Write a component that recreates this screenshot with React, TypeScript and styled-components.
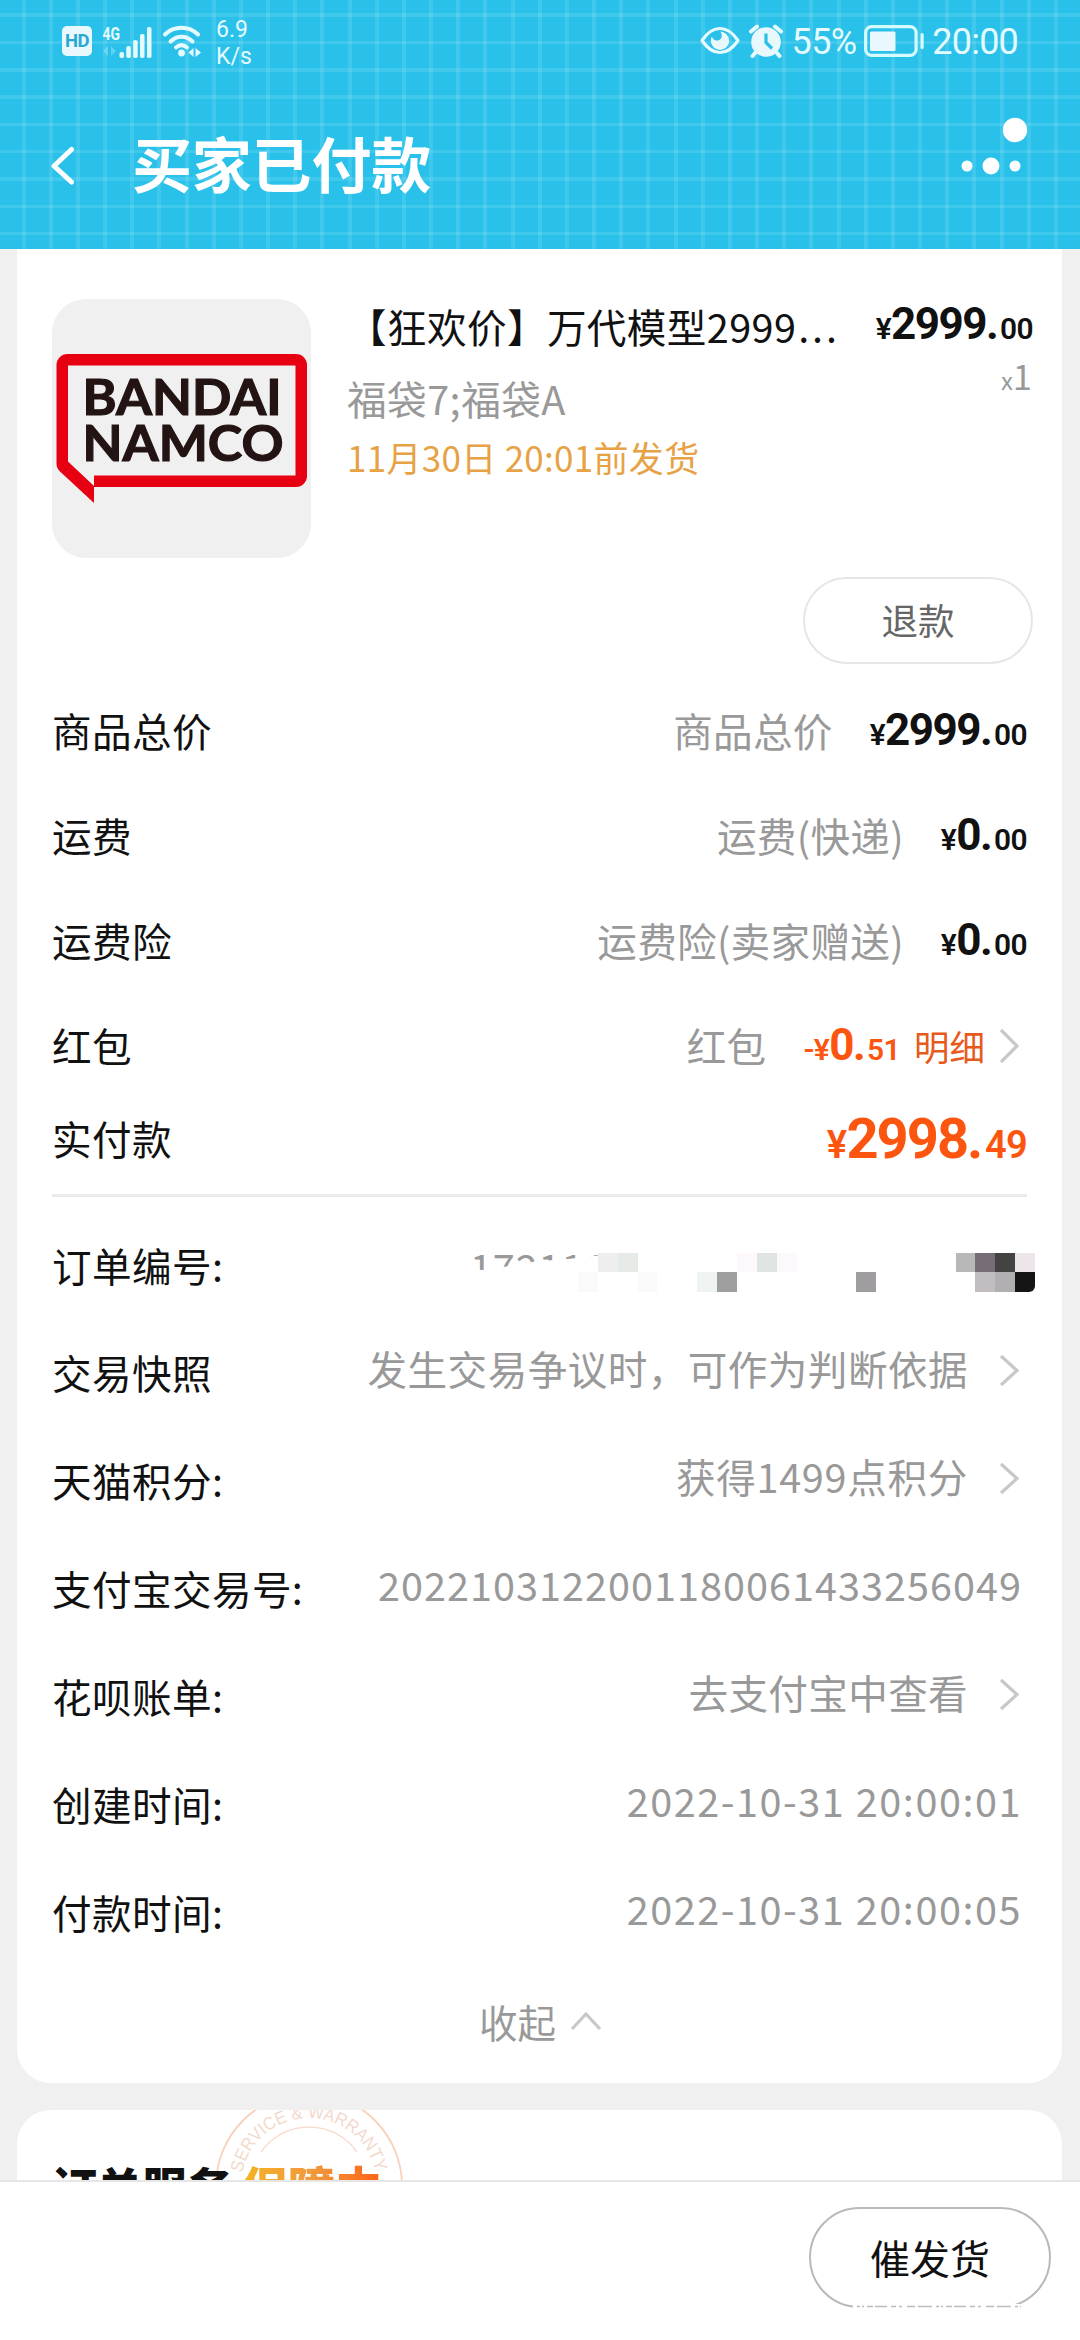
import React from "react";
import styled, { createGlobalStyle } from "styled-components";

const CJK = '"Noto Sans CJK SC", "Noto Sans", sans-serif';
const NUM = 'Roboto, "Noto Sans CJK SC", sans-serif';

const Global = createGlobalStyle`
  * { box-sizing: border-box; }
  body { margin: 0; background: #f0f0f0; font-family: ${CJK}; color: #111; }
  svg { display: block; flex: none; }
`;

const Screen = styled.div`
  width: 1080px;
  height: 2340px;
  display: flex;
  flex-direction: column;
  overflow: hidden;
  background: #f0f0f0;
`;

/* ---------- header ---------- */

const Header = styled.header`
  flex: none;
  height: 249px;
  display: flex;
  flex-direction: column;
  color: #fff;
  background-color: #29c1ea;
  background-image:
    repeating-linear-gradient(
      90deg,
      transparent 0 21.5px,
      rgba(255, 255, 255, 0.11) 21.5px 25.5px,
      transparent 25.5px 27.17px
    ),
    repeating-linear-gradient(
      180deg,
      transparent 0 13.5px,
      rgba(255, 255, 255, 0.11) 13.5px 17px,
      transparent 17px 27.3px
    );
`;

const StatusBar = styled.div`
  height: 82px;
  padding: 0 62px 0 62px;
  display: flex;
  align-items: center;
  justify-content: space-between;
  color: #e4faff;
  font-family: ${NUM};
`;

const StatusGroup = styled.div<{ $gap: number }>`
  display: flex;
  align-items: center;
  gap: ${(p) => p.$gap}px;
`;

const HdBadge = styled.span`
  width: 30px;
  height: 30px;
  border-radius: 5px;
  background: #e8f8fd;
  color: #29a9d2;
  font-size: 18.5px;
  font-weight: 700;
  line-height: 31px;
  text-align: center;
  letter-spacing: -0.5px;
`;

const NetSpeed = styled.span`
  margin-left: 5px;
  padding-top: 3px;
  font-size: 23px;
  line-height: 27px;
  white-space: pre-line;
`;

const StatusText = styled.span<{ $spacing: number }>`
  padding-top: 2px;
  font-size: 36px;
  line-height: 40px;
  letter-spacing: ${(p) => p.$spacing}px;
`;

const TitleBar = styled.div`
  height: 167px;
  padding: 0 51px;
  display: flex;
  align-items: flex-start;
`;

const BackIcon = styled.svg`
  margin-top: 63px;
`;

const PageTitle = styled.h1`
  margin: 37px auto 0 57px;
  font-size: 60px;
  line-height: 86px;
  font-weight: 700;
  letter-spacing: -0.2px;
`;

const MoreIcon = styled.svg`
  margin-top: 34px;
`;

/* ---------- cards ---------- */

const Body = styled.main`
  flex: 1;
  min-height: 0;
  overflow: hidden;
  padding: 0 18px 0 17px;
  display: flex;
  flex-direction: column;
  gap: 27px;
`;

const OrderCard = styled.section`
  flex: none;
  height: 1834px;
  padding: 50px 35px 0;
  background: #fff;
  border-radius: 0 0 34px 34px;
`;

const Product = styled.div`
  display: flex;
  height: 259px;
  margin-right: -6px;
`;

const Thumb = styled.div`
  flex: none;
  width: 259px;
  height: 259px;
  border-radius: 34px;
  background: #f0f0f0;
  overflow: hidden;
`;

const ProductInfo = styled.div`
  margin: -2px 0 0 36px;
  width: 494px;
  display: flex;
  flex-direction: column;
  white-space: nowrap;
`;

const ProductTitle = styled.div`
  font-size: 39.6px;
  line-height: 58px;
  letter-spacing: 0.4px;
`;

const Dots = styled.span`
  letter-spacing: 2.8px;
  margin-left: 2px;
`;

const Sku = styled.div`
  margin-top: 14px;
  font-size: 39.6px;
  line-height: 58px;
  letter-spacing: 0.5px;
  color: #999;
`;

const ShipBy = styled.div`
  margin-top: 4px;
  font-size: 35px;
  line-height: 52px;
  letter-spacing: 0.3px;
  color: #e6a245;
`;

const PriceColumn = styled.div`
  margin-left: auto;
  display: flex;
  flex-direction: column;
  align-items: flex-end;
`;

const Quantity = styled.div`
  margin: 0 1px 0 0;
  font-size: 34.5px;
  line-height: 48px;
  color: #999;
  small { font-size: 24px; }
`;

const Money = styled.span<{ $size?: number; $color?: string }>`
  display: inline-flex;
  align-items: baseline;
  font-family: ${NUM};
  font-weight: 700;
  font-size: ${(p) => p.$size ?? 44}px;
  line-height: 1.18;
  letter-spacing: -0.035em;
  color: ${(p) => p.$color ?? "#111"};
`;

const Point = styled.span`
  letter-spacing: 0.03em;
`;

const Minor = styled.span`
  font-size: 0.68em;
  font-weight: 600;
  letter-spacing: -0.02em;
`;

const Actions = styled.div`
  margin: 19px -6px 17px 0;
  display: flex;
  justify-content: flex-end;
`;

const RefundButton = styled.button`
  width: 230px;
  height: 87px;
  padding: 0 0 2px;
  border: 2px solid #e6e6e6;
  border-radius: 44px;
  background: #fff;
  color: #666;
  font: 400 36.5px/50px ${CJK};
`;

const Row = styled.div<{ $h: number; $lift?: number }>`
  height: ${(p) => p.$h}px;
  display: flex;
  align-items: center;
  justify-content: space-between;
  font-size: 39.6px;
  line-height: 58px;
  white-space: nowrap;
  & > :last-child { margin-bottom: ${(p) => p.$lift ?? 0}px; }
`;

const Label = styled.span`
  margin-bottom: 7px;
  letter-spacing: 0.4px;
`;

const Value = styled.span<{ $right?: number }>`
  display: flex;
  align-items: center;
  margin-right: ${(p) => p.$right ?? 0}px;
  color: #999;
`;

const Note = styled.span<{ $gap?: number; $spacing?: number; $rise?: number }>`
  margin: 0 ${(p) => p.$gap ?? 0}px ${(p) => p.$rise ?? 2}px 0;
  letter-spacing: ${(p) => p.$spacing ?? 0.3}px;
`;

const Detail = styled.span`
  margin: 0 14px 0 14px;
  font-size: 35.5px;
  color: #e85a1c;
`;

const Divider = styled.hr`
  height: 3px;
  margin: 12px 0 19px;
  border: 0;
  background: #ebebeb;
`;

const MaskedNumber = styled.span`
  position: relative;
  margin-right: -8px;
  width: 562px;
  height: 39px;
  display: flex;
  justify-content: flex-end;
  align-items: flex-start;
  color: #999;
`;

const NumberHead = styled.span`
  position: absolute;
  left: -3px;
  top: -16px;
  letter-spacing: 0.9px;
  clip-path: polygon(0 0, 142px 0, 142px 18px, 118px 20px, 94px 23px, 68px 24.5px, 46px 28px, 22px 33px, 0 34px);
`;

const Mosaic = styled.span`
  display: grid;
  grid-template-columns: repeat(23, 19.88px);
  grid-template-rows: repeat(2, 19.5px);
  border-bottom-right-radius: 6px;
  overflow: hidden;
`;

const Tile = styled.i<{ $col: number; $row: number; $fill: string }>`
  grid-column: ${(p) => p.$col};
  grid-row: ${(p) => p.$row};
  background: ${(p) => p.$fill};
`;

const Collapse = styled.div`
  height: 104px;
  padding-left: 2px;
  display: flex;
  align-items: center;
  justify-content: center;
  gap: 14px;
  color: #999;
  font-size: 38.5px;
  line-height: 58px;
`;

const ServiceCard = styled.section`
  flex: none;
  position: relative;
  height: 160px;
  padding: 43px 35px 0;
  background: #fff;
  border-radius: 34px 34px 0 0;
  overflow: hidden;
`;

const Stamp = styled.svg`
  position: absolute;
  left: 192px;
  top: 0;
`;

const ServiceTitle = styled.h2`
  position: relative;
  margin: 0;
  display: flex;
  align-items: baseline;
  font-size: 45px;
  line-height: 66px;
  font-weight: 900;
  color: #111;
`;

const Guarded = styled.span`
  margin-left: 9px;
  font-size: 47px;
  color: transparent;
  background: linear-gradient(90deg, #f6b323, #ef9a3d 50%, #ff6417);
  background-clip: text;
  -webkit-background-clip: text;
`;

/* ---------- footer ---------- */

const Footer = styled.footer`
  flex: none;
  height: 160px;
  padding: 25px 29px 0;
  display: flex;
  justify-content: flex-end;
  align-items: flex-start;
  background: #fff;
  border-top: 2px solid #e6e6e6;
`;

const UrgeButton = styled.button`
  position: relative;
  width: 242px;
  height: 101px;
  padding: 0 0 2px;
  border: 2px solid #b9b9b9;
  border-radius: 51px;
  background: #fff;
  color: #111;
  font: 400 40px/58px ${CJK};
`;

const WornEdge = styled.svg`
  position: absolute;
  left: 42px;
  bottom: -3px;
`;

const rowChevron = (h: number) => (
  <svg width="21" height={h + 4} viewBox={`0 0 21 ${h + 4}`} fill="none" stroke="#c8c8c8" strokeWidth="3.2">
    <path d={`M2 2 L18 ${(h + 4) / 2} L2 ${h + 2}`} />
  </svg>
);

const Price = ({ int, dec, size, color, minus }: { int: string; dec: string; size?: number; color?: string; minus?: boolean }) => (
  <Money $size={size} $color={color}>
    <Minor>{minus ? "-¥" : "¥"}</Minor>
    {int}<Point>.</Point><Minor>{dec}</Minor>
  </Money>
);

const tiles: [number, number, string][] = [
  [2, 1, "#eeeeee"], [3, 1, "#e6ebe8"], [9, 1, "#fcf8fc"], [10, 1, "#dfe5e2"], [11, 1, "#fcf9fc"],
  [20, 1, "#b8b8b8"], [21, 1, "#776d77"], [22, 1, "#434343"], [23, 1, "#ece5e9"],
  [1, 2, "#fafafa"], [4, 2, "#fafafa"], [7, 2, "#eff3f1"], [8, 2, "#9f9f9f"], [15, 2, "#9f9d9f"],
  [21, 2, "#c1bdc1"], [22, 2, "#b1afb1"], [23, 2, "#151515"],
];

const details: { label: string; value: string; link?: boolean; spacing?: number }[] = [
  { label: "交易快照", value: "发生交易争议时，可作为判断依据", link: true, spacing: 0.45 },
  { label: "天猫积分:", value: "获得1499点积分", link: true, spacing: 0.7 },
  { label: "支付宝交易号:", value: "2022103122001180061433256049", spacing: 1.03 },
  { label: "花呗账单:", value: "去支付宝中查看", link: true, spacing: 0.35 },
  { label: "创建时间:", value: "2022-10-31 20:00:01", spacing: 1.55 },
  { label: "付款时间:", value: "2022-10-31 20:00:05", spacing: 1.55 },
];

export default function App() {
  return (
    <Screen>
      <Global />
      <Header>
        <StatusBar>
          <StatusGroup $gap={10}>
            <HdBadge>HD</HdBadge>
            <svg width="51" height="34" viewBox="0 0 51 34" fill="#e4faff">
              <text x="0.5" y="16" fontFamily="Roboto" fontWeight="700" fontSize="18" textLength="17.5" lengthAdjust="spacingAndGlyphs">4G</text>
              <path d="M6 22v10l-5-5zM9 22v10l5-5z" opacity="0.3" />
              <rect x="17.5" y="28" width="4.5" height="6" rx="1.8" />
              <rect x="24.3" y="22" width="4.5" height="12" rx="1.8" />
              <rect x="31.2" y="16" width="4.5" height="18" rx="1.8" />
              <rect x="38" y="10" width="4.5" height="24" rx="1.8" />
              <rect x="45" y="3" width="4.5" height="31" rx="1.8" />
            </svg>
            <svg width="38" height="32" viewBox="0 0 38 32" fill="none" stroke="#e4faff" strokeWidth="4" strokeLinecap="round">
              <path d="M2 9.5C11 0.5 26 0.5 35 9.5" />
              <path d="M7.5 16.5C14 10 23 10 29.5 16.5" />
              <path d="M13 22.5C16.5 19.5 20.5 19.5 24 22.5" />
              <circle cx="18.5" cy="28" r="3.4" fill="#e4faff" stroke="none" />
              <path d="M30.5 23v9l-5-4.5zM32.5 23v9l5.5-4.5z" fill="#e4faff" stroke="none" />
            </svg>
            <NetSpeed>{"6.9\nK/s"}</NetSpeed>
          </StatusGroup>
          <StatusGroup $gap={8}>
            <svg width="40" height="32" viewBox="0 0 40 32" fill="none">
              <path d="M2 15.5C8 6.5 14 3.5 20 3.5S32 6.5 38 15.5C32 24.5 26 27.5 20 27.5S8 24.5 2 15.5z" stroke="#e4faff" strokeWidth="3.2" strokeLinejoin="round" />
              <path d="M20 6.5a9.2 9.2 0 1 1-9.2 9.2c0-1.5.3-2.9 1-4.2 1 2.5 3 4 5 4 3 0 5-2.2 5-4.8 0-1.7-.7-3.2-1.8-4.2z" fill="#e8f8fd" />
            </svg>
            <svg width="36" height="34" viewBox="0 0 36 34" fill="#e8f8fd">
              <circle cx="18" cy="18" r="14.8" />
              <path d="M3 7.5L9 2.5M33 7.5L27 2.5" stroke="#e4faff" strokeWidth="4" strokeLinecap="round" />
              <path d="M7.5 28.5L4.5 32M28.5 28.5L31.5 32" stroke="#e4faff" strokeWidth="4" strokeLinecap="round" />
              <path d="M18 9.5V18.5L24 24.5" stroke="#29c1ea" strokeWidth="3.2" fill="none" />
            </svg>
            <StatusText $spacing={-0.7}>55%</StatusText>
            <svg width="60" height="32" viewBox="0 0 60 32" fill="none">
              <rect x="1.6" y="1.6" width="50.5" height="28.8" rx="6" stroke="#d4fbff" strokeWidth="3.2" />
              <rect x="6" y="6.5" width="25.5" height="19.5" rx="1.5" fill="#e8f8fd" />
              <rect x="56.5" y="8" width="3.2" height="16" rx="1.5" fill="#d4fbff" />
            </svg>
            <StatusText $spacing={-0.8}>20:00</StatusText>
          </StatusGroup>
        </StatusBar>
        <TitleBar>
          <BackIcon width="24" height="42" viewBox="0 0 24 42" fill="none" stroke="#fff" strokeWidth="5" strokeLinecap="round" strokeLinejoin="round">
            <path d="M20.5 4.5L3 21L20.5 37" />
          </BackIcon>
          <PageTitle>买家已付款</PageTitle>
          <MoreIcon width="70" height="64" viewBox="0 0 70 64" fill="#fff">
            <circle cx="56" cy="14" r="12.2" />
            <circle cx="8" cy="50" r="5.5" />
            <circle cx="32" cy="50" r="8.5" />
            <circle cx="56" cy="50" r="5.5" />
          </MoreIcon>
        </TitleBar>
      </Header>

      <Body>
        <OrderCard>
          <Product>
            <Thumb>
              <svg width="259" height="259" viewBox="0 0 259 259">
                <path
                  fill="#e60012"
                  fillRule="evenodd"
                  d="M15 55H244a11 11 0 0 1 11 11V177a11 11 0 0 1-11 11H42V204L8 172.500q-3.500-3.500-3.500-8V66a11 11 0 0 1 11-11zM16 66.500V162.500L42 187V176.500H243.500V66.500z"
                />
                <g fill="#231413" stroke="#231413" strokeWidth="1.2" fontFamily="Lato" fontWeight="700" fontSize="49">
                  <text x="30.5" y="115.5" textLength="199" lengthAdjust="spacingAndGlyphs">BANDAI</text>
                  <text x="30.5" y="161.5" textLength="201" lengthAdjust="spacingAndGlyphs">NAMCO</text>
                </g>
              </svg>
            </Thumb>
            <ProductInfo>
              <ProductTitle>【狂欢价】万代模型2999<Dots>...</Dots></ProductTitle>
              <Sku>福袋7;福袋A</Sku>
              <ShipBy>11月30日 20:01前发货</ShipBy>
            </ProductInfo>
            <PriceColumn>
              <Price int="2999" dec="00" />
              <Quantity><small>x</small>1</Quantity>
            </PriceColumn>
          </Product>

          <Actions>
            <RefundButton>退款</RefundButton>
          </Actions>

          <Row $h={105} $lift={5}>
            <Label>商品总价</Label>
            <Value><Note $gap={37}>商品总价</Note><Price int="2999" dec="00" /></Value>
          </Row>
          <Row $h={105} $lift={5}>
            <Label>运费</Label>
            <Value><Note $gap={37}>运费(快递)</Note><Price int="0" dec="00" /></Value>
          </Row>
          <Row $h={105} $lift={5}>
            <Label>运费险</Label>
            <Value><Note $gap={37}>运费险(卖家赠送)</Note><Price int="0" dec="00" /></Value>
          </Row>
          <Row $h={105} $lift={5}>
            <Label>红包</Label>
            <Value $right={7}>
              <Note $gap={37}>红包</Note>
              <Price int="0" dec="51" color="#fb5510" minus />
              <Detail>明细</Detail>
              {rowChevron(32)}
            </Value>
          </Row>
          <Row $h={81} $lift={5}>
            <Label>实付款</Label>
            <Value><Price int="2998" dec="49" size={56} color="#fb5510" /></Value>
          </Row>

          <Divider />

          <Row $h={105} $lift={-7}>
            <Label>订单编号:</Label>
            <MaskedNumber>
              <NumberHead>172111</NumberHead>
              <Mosaic>
                {tiles.map(([col, row, fill]) => (
                  <Tile key={`${col}-${row}`} $col={col} $row={row} $fill={fill} />
                ))}
              </Mosaic>
            </MaskedNumber>
          </Row>
          {details.map((d) => (
            <Row key={d.label} $h={108} $lift={9}>
              <Label>{d.label}</Label>
              <Value $right={d.link ? 7 : 5}>
                <Note $gap={d.link ? 31 : 0} $spacing={d.spacing} $rise={6}>{d.value}</Note>
                {d.link && rowChevron(29)}
              </Value>
            </Row>
          ))}

          <Collapse>
            收起
            <svg width="32" height="20" viewBox="0 0 32 20" fill="none" stroke="#c8c8c8" strokeWidth="3.2">
              <path d="M2 18L16 3L30 18" />
            </svg>
          </Collapse>
        </OrderCard>

        <ServiceCard>
          <Stamp width="200" height="90" viewBox="0 0 200 90" fill="none">
            <circle cx="100" cy="76" r="93" stroke="#f8d0bb" strokeWidth="1.8" />
            <path d="M52 42A58.5 58.5 0 0 1 148 42" stroke="#f8ddd0" strokeWidth="1.5" />
            <path id="stamp-arc" d="M33.3 63A68 68 0 0 1 167.3 66" />
            <text fill="#f3d9cc" fontFamily="Liberation Sans" fontSize="18">
              <textPath href="#stamp-arc" textLength="186" lengthAdjust="spacingAndGlyphs">SERVICE &amp; WARRANTY</textPath>
            </text>
          </Stamp>
          <ServiceTitle>订单服务<Guarded>保障中</Guarded></ServiceTitle>
        </ServiceCard>
      </Body>

      <Footer>
        <UrgeButton>
          催发货
          <WornEdge width="180" height="5" viewBox="0 0 180 5">
            <rect width="178" height="5" fill="#fff" />
            <path d="M4 2.5H168" stroke="#bdbdbd" strokeWidth="1.6" strokeDasharray="3 2 2 3 6 2 12 4 5 3 3 5 8 3 14 4" />
          </WornEdge>
        </UrgeButton>
      </Footer>
    </Screen>
  );
}
